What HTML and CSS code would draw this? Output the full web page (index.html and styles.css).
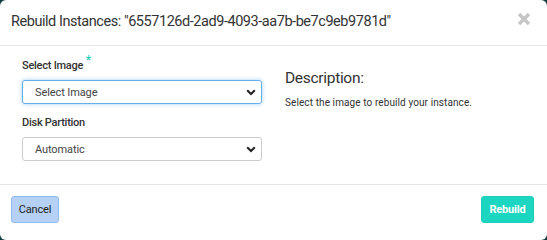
FILE: index.html
```html
<!DOCTYPE html>
<html>
<head>
<meta charset="utf-8">
<link rel="stylesheet" href="styles.css">
</head>
<body>
<div class="modal">
  <div class="modal-header">
    <h4 class="title">Rebuild Instances: "6557126d-2ad9-4093-aa7b-be7c9eb9781d"</h4>
    <button class="close" aria-label="Close">
      <svg width="14" height="14" viewBox="0 0 14 14"><path d="M2 2 L12 12 M12 2 L2 12" stroke="#c6c6c6" stroke-width="3.4" stroke-linecap="butt"/></svg>
    </button>
  </div>
  <div class="modal-body">
    <div class="left">
      <div class="group">
        <label class="label">Select Image <span class="req">*</span></label>
        <div class="select-wrap">
          <select class="select focused"><option>Select Image</option></select>
          <svg class="chev" width="10" height="7" viewBox="0 0 10 7"><path d="M1.2 1.2 L5 5 L8.8 1.2" fill="none" stroke="#222" stroke-width="2"/></svg>
        </div>
      </div>
      <div class="group">
        <label class="label">Disk Partition</label>
        <div class="select-wrap">
          <select class="select"><option>Automatic</option></select>
          <svg class="chev" width="10" height="7" viewBox="0 0 10 7"><path d="M1.2 1.2 L5 5 L8.8 1.2" fill="none" stroke="#222" stroke-width="2"/></svg>
        </div>
      </div>
    </div>
    <div class="right">
      <h3 class="desc-title">Description:</h3>
      <p class="desc">Select the image to rebuild your instance.</p>
    </div>
  </div>
  <div class="modal-footer">
    <button class="btn btn-cancel">Cancel</button>
    <button class="btn btn-primary">Rebuild</button>
  </div>
</div>
</body>
</html>
```
FILE: styles.css
```css
html, body {
  margin: 0;
  padding: 0;
  background: #123d40;
}
.modal {
  width: 547px;
  height: 100vh;
  min-height: 235px;
  background: #fff;
  border-radius: 6px;
  display: flex;
  flex-direction: column;
  font-family: Roboto, "Open Sans", sans-serif;
  color: #333;
  box-sizing: border-box;
  overflow: hidden;
}
.modal-header {
  height: 46px;
  border-bottom: 1px solid #e5e5e5;
  display: flex;
  align-items: center;
  justify-content: space-between;
  padding: 0 16px 0 11px;
  box-sizing: border-box;
  flex: none;
}
.title {
  margin: 0 0 2px 0;
  font-size: 14.5px;
  font-weight: 400;
  color: #333;
  letter-spacing: -0.45px;
}
.close {
  border: 0;
  background: none;
  padding: 0;
  margin-top: -7px;
  display: flex;
}
.modal-body {
  height: 138px;
  flex: none;
  display: grid;
  grid-template-columns: 240px 1fr;
  column-gap: 23px;
  padding: 11px 22px 0 22px;
  box-sizing: border-box;
}
.group {
  margin-bottom: 11px;
}
.label {
  display: block;
  font-size: 11px;
  line-height: 16px;
  font-weight: 500;
  color: #333;
  margin-bottom: 6px;
  letter-spacing: -0.25px;
}
.req {
  color: #1fcfb5;
  font-size: 12px;
  position: relative;
  top: -5px;
}
.select-wrap {
  position: relative;
  height: 24px;
}
.select {
  appearance: none;
  -webkit-appearance: none;
  width: 240px;
  height: 24px;
  box-sizing: border-box;
  border: 1px solid #ccc;
  border-radius: 3px;
  background: #fff;
  font-family: Roboto, "Open Sans", sans-serif;
  font-size: 11px;
  color: #444;
  padding: 0 0 0 12px;
  margin: 0;
  letter-spacing: -0.1px;
}
.select.focused {
  border-color: #66afe9;
  box-shadow: 0 0 4px rgba(102, 175, 233, 0.6);
}
.chev {
  position: absolute;
  right: 6px;
  top: 9px;
  pointer-events: none;
}
.right {
  padding-top: 12px;
}
.desc-title {
  margin: 0;
  font-size: 15.5px;
  font-weight: 400;
  line-height: 18px;
  color: #333;
  letter-spacing: -0.3px;
}
.desc {
  margin: 9px 0 0 0;
  font-size: 10px;
  line-height: 14px;
  color: #333;
  letter-spacing: 0.1px;
}
.modal-footer {
  border-top: 1px solid #e5e5e5;
  flex: 1;
  display: flex;
  justify-content: space-between;
  align-items: flex-start;
  padding: 11px 13px 0 11px;
  box-sizing: border-box;
}
.btn {
  height: 27px;
  border-radius: 3px;
  font-family: Roboto, "Open Sans", sans-serif;
  font-size: 11px;
  padding: 0;
  cursor: pointer;
  letter-spacing: -0.2px;
}
.btn-cancel {
  background: #b5d1f6;
  border: 1px solid #94bbef;
  color: #222;
  width: 48px;
}
.btn-primary {
  background: #1dd6c1;
  border: 1px solid #1ccdb9;
  color: #fff;
  font-weight: 700;
  width: 53px;
}
```
